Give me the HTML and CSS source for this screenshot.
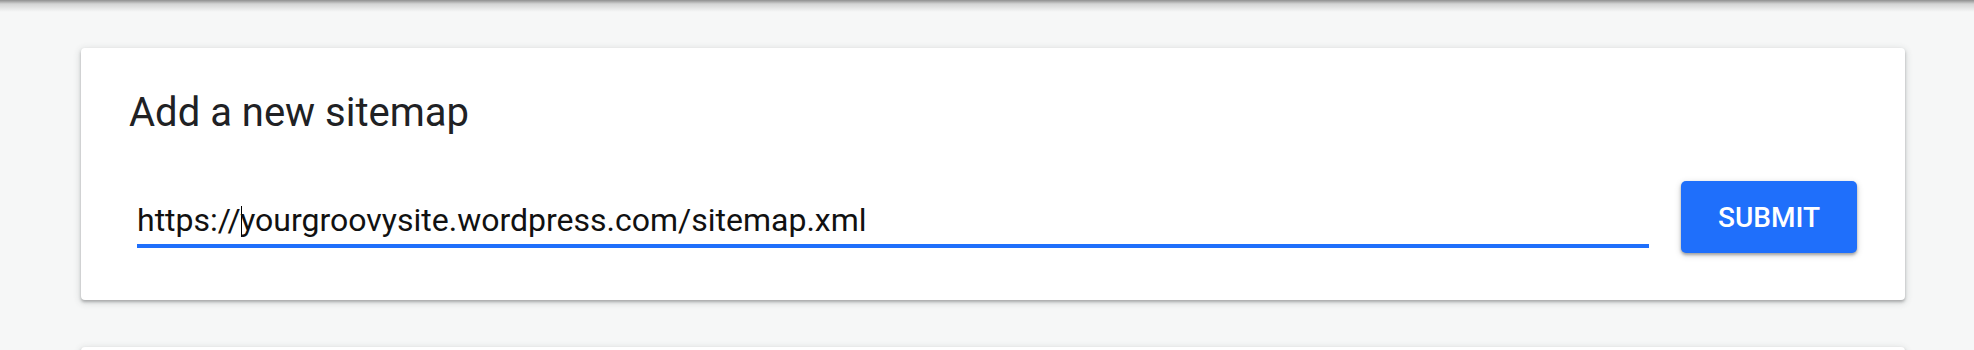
FILE: index.html
```html
<!DOCTYPE html>
<html lang="en">
<head>
  <meta charset="UTF-8" />
  <meta name="viewport" content="width=device-width, initial-scale=1.0" />
  <title>Sitemaps</title>
  <link rel="stylesheet" href="styles.css">
</head>
<body>
  <div class="top-shade"></div>
  <main class="page">
    <section class="card">
      <h2 class="card-title">Add a new sitemap</h2>
      <div class="row">
        <div class="field">
          <span>https://</span><span class="caret"></span><span>yourgroovysite.wordpress.com/sitemap.xml</span>
        </div>
        <button class="submit">SUBMIT</button>
      </div>
    </section>
    <section class="card next"></section>
  </main>
</body>
</html>
```

FILE: styles.css
```css
html, body {
  margin: 0;
  padding: 0;
}
body {
  font-family: Roboto, "Liberation Sans", Arial, sans-serif;
  background: #f6f7f7;
  overflow: hidden;
  height: 350px;
}
.top-shade {
  height: 12px;
  background: linear-gradient(to bottom, rgba(0, 0, 0, 0.42) 0, rgba(0, 0, 0, 0.14) 4px, rgba(0, 0, 0, 0) 12px);
}
.page {
  padding: 36px 0 0 81px;
}
.card {
  width: 1824px;
  box-sizing: border-box;
  background: #fff;
  border-radius: 4px;
  padding: 41px 48px 47px 48px;
  box-shadow: 0 2px 3px rgba(60, 64, 67, 0.35), 0 2px 6px 2px rgba(60, 64, 67, 0.12);
}
.card.next {
  margin-top: 47px;
  height: 80px;
}
.card-title {
  margin: 0;
  font-size: 40px;
  line-height: 48px;
  font-weight: 400;
  color: #202124;
}
.row {
  display: flex;
  align-items: flex-start;
  gap: 32px;
  margin-top: 44px;
}
.field {
  flex: 1;
  margin-left: 8px;
  padding: 19px 0 4px 0;
  font-size: 32px;
  line-height: 40px;
  color: #111;
  border-bottom: 4px solid #1f6ffb;
  white-space: nowrap;
}
.caret {
  display: inline-block;
  width: 0;
  height: 31px;
  border-left: 1.5px solid #000;
  margin-right: -1.5px;
  vertical-align: -6px;
}
.submit {
  width: 176px;
  height: 72px;
  border: none;
  border-radius: 5px;
  background: #1f6ffb;
  color: #fff;
  font-family: Roboto, "Liberation Sans", Arial, sans-serif;
  font-size: 28px;
  font-weight: 500;
  letter-spacing: 0;
  box-shadow: 0 2px 3px rgba(0, 0, 0, 0.3), 0 2px 6px 1px rgba(0, 0, 0, 0.12);
  cursor: pointer;
}
```
